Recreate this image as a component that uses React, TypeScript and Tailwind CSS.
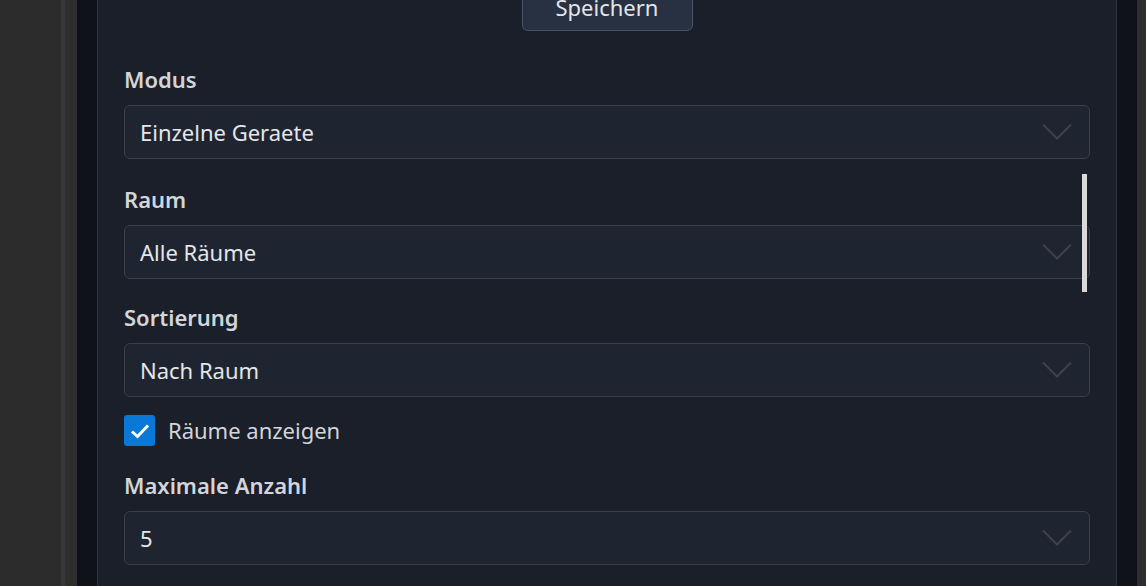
import React from 'react';

const Chevron: React.FC = () => (
  <svg width="30" height="18" viewBox="0 0 30 18" fill="none" className="shrink-0">
    <path d="M1 1.5 L15 15.5 L29 1.5" stroke="#3c414b" strokeWidth="2" />
  </svg>
);

const Field: React.FC<{ label: string; value: string }> = ({ label, value }) => (
  <div className="flex flex-col">
    <div className="h-[28px] leading-[28px] text-[22px] font-semibold text-[#d2d5da] mb-[12px]">{label}</div>
    <div className="h-[54px] flex items-center justify-between pl-[15px] pr-[17px] bg-[#1f2530] border border-[#393e48] rounded-[6px]">
      <span className="text-[22px] text-[#e4e6ea]">{value}</span>
      <Chevron />
    </div>
  </div>
);

export default function App() {
  return (
    <div
      className="w-[1146px] h-[586px] flex overflow-hidden bg-[#2c2c2c]"
      style={{ fontFamily: '"Noto Sans", "Open Sans", sans-serif' }}
    >
      <div className="w-[61px] shrink-0 bg-[#2c2c2c]" />
      <div className="w-[4px] shrink-0 bg-[#38383a]" />
      <div className="w-[12px] shrink-0 bg-[#2e2e2e]" />
      <div className="w-[20px] shrink-0 bg-[#0f1219]" />

      <div className="relative w-[1020px] shrink-0 bg-[#1a1f29] border-x border-[#2b3547] px-[26px]">
        <div className="flex justify-center">
          <button className="-mt-[18px] w-[171px] h-[49px] bg-[#273142] border border-[#48536a] rounded-[6px] text-[22px] leading-none text-[#e4e6ea]">
            Speichern
          </button>
        </div>

        <div className="mt-[34px]">
          <Field label="Modus" value="Einzelne Geraete" />
          <div className="mt-[26px]">
            <Field label="Raum" value="Alle Räume" />
          </div>
          <div className="mt-[24px]">
            <Field label="Sortierung" value="Nach Raum" />
          </div>

          <label className="mt-[18px] flex items-center h-[31px]">
            <span className="w-[31px] h-[31px] rounded-[3px] bg-[#0a78d6] flex items-center justify-center">
              <svg width="20" height="16" viewBox="0 0 20 16" fill="none">
                <path d="M2 8.5 L7.5 13.5 L18 2.5" stroke="#ffffff" strokeWidth="3" />
              </svg>
            </span>
            <span className="ml-[13px] text-[22px] text-[#d2d5da]">Räume anzeigen</span>
          </label>

          <div className="mt-[25px]">
            <Field label="Maximale Anzahl" value="5" />
          </div>
        </div>

        <div className="absolute left-[984px] top-[174px] w-[5px] h-[118px] bg-[#d9d9d9]" />
      </div>

      <div className="w-[20px] shrink-0 bg-[#0f1219]" />
      <div className="flex-1 bg-[#2e2e2e]" />
    </div>
  );
}
